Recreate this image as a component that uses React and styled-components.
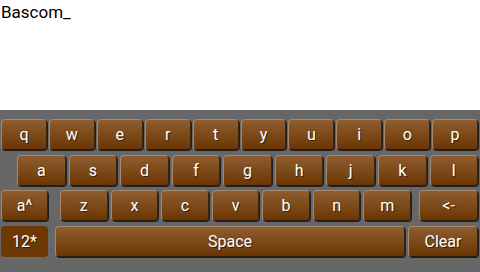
import React from "react";
import styled, { createGlobalStyle } from "styled-components";

const Global = createGlobalStyle`
  html, body { margin: 0; padding: 0; background: #fff; }
  body { font-family: Roboto, "Noto Sans", "DejaVu Sans", sans-serif; }
`;

const Screen = styled.div`
  width: 480px;
  height: 272px;
  display: flex;
  flex-direction: column;
  overflow: hidden;
`;

const Display = styled.div`
  height: 110px;
  flex: none;
  background: #fff;
  color: #000;
  font-size: 17px;
  line-height: 18px;
  padding: 3px 0 0 1px;
  box-sizing: border-box;
`;

const Keyboard = styled.div`
  flex: 1;
  background: #676767;
  padding-top: 9px;
  display: flex;
  flex-direction: column;
`;

const Row = styled.div`
  display: flex;
  gap: ${(p) => p.$gap || 3}px;
  height: 31px;
  padding-left: ${(p) => p.$left || 1}px;
  padding-right: 2px;
  margin-top: ${(p) => p.$mt || 0}px;
`;

const Key = styled.div`
  box-sizing: border-box;
  flex: ${(p) => (p.$w ? `0 0 ${p.$w}px` : "1 1 0")};
  min-width: 0;
  border-radius: 4px;
  display: flex;
  align-items: center;
  justify-content: center;
  color: #fff;
  font-size: 16px;
  text-shadow: 1px 1px 0 rgba(0, 0, 0, 0.5);
  margin-left: ${(p) => p.$ml || 0}px;
  margin-right: ${(p) => p.$mr || 0}px;
  background: ${(p) =>
    p.$flat ? "#6d3804" : "linear-gradient(#8e5d30, #6b3602)"};
  border: ${(p) => (p.$flat ? "none" : "1px solid #a38a70")};
  border-right-color: #3a2412;
  border-bottom-color: #2e1c0c;
  box-shadow: ${(p) => (p.$flat ? "none" : "1px 1px 0 #1e1e1e")};
`;

const row1 = ["q", "w", "e", "r", "t", "y", "u", "i", "o", "p"];
const row2 = ["a", "s", "d", "f", "g", "h", "j", "k", "l"];
const row3 = ["z", "x", "c", "v", "b", "n", "m"];

export default function App() {
  return (
    <Screen>
      <Global />
      <Display>Bascom_</Display>
      <Keyboard>
        <Row $gap={2}>
          {row1.map((k) => (
            <Key key={k}>{k}</Key>
          ))}
        </Row>
        <Row $left={17} $mt={5}>
          {row2.map((k) => (
            <Key key={k}>{k}</Key>
          ))}
        </Row>
        <Row $mt={4}>
          <Key $w={47} $mr={9}>a^</Key>
          {row3.map((k) => (
            <Key key={k}>{k}</Key>
          ))}
          <Key $w={59} $ml={5}>&lt;-</Key>
        </Row>
        <Row $mt={5}>
          <Key $w={47} $flat $mr={4}>12*</Key>
          <Key>Space</Key>
          <Key $w={70}>Clear</Key>
        </Row>
      </Keyboard>
    </Screen>
  );
}
